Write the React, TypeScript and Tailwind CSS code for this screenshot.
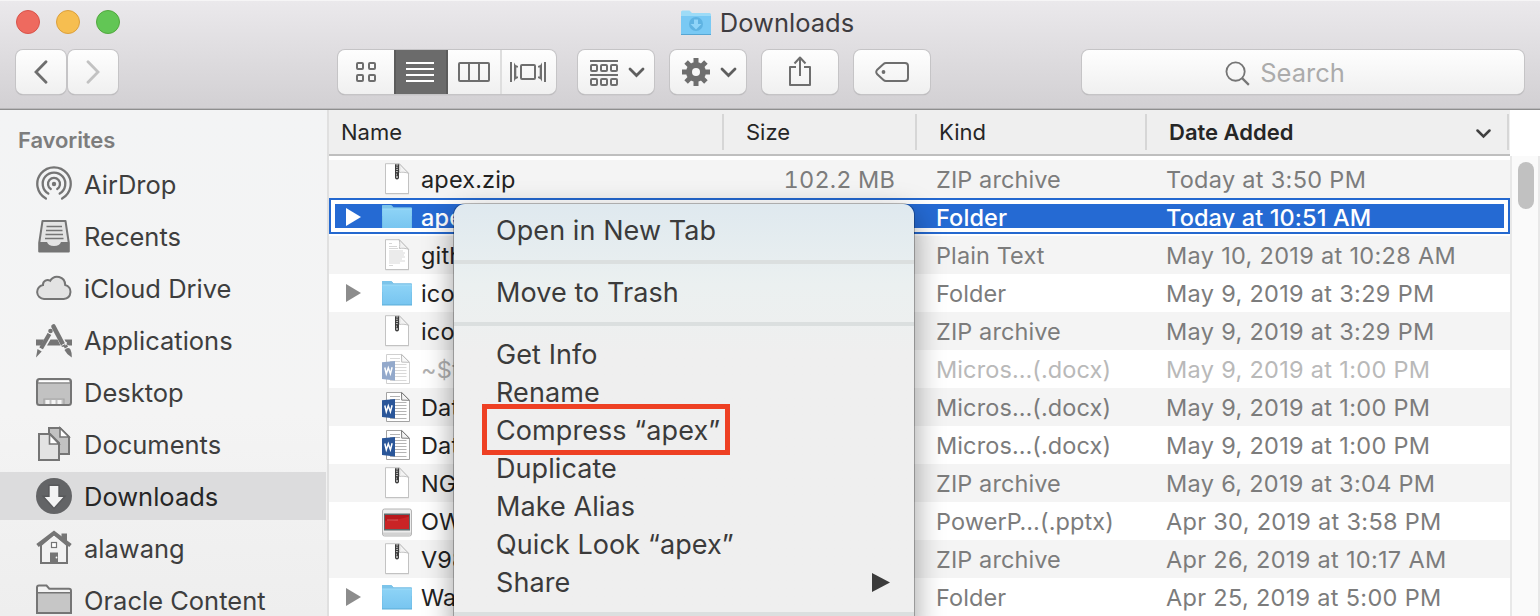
import type { ReactNode } from "react";

const FONT = "font-['Inter','Liberation_Sans',sans-serif]";

/* ---------- file icons ---------- */

function PageShape() {
  return (
    <>
      <path d="M4.500 1h13.800L28 10.800v20.400H4.500z" fill="#000" opacity=".18" />
      <path d="M4.500.7h13.700l9.300 9.600v20.200h-23z" fill="#fff" stroke="#bdbdbd" strokeWidth=".9" />
      <path d="M18.200.7c.8 3.400.7 6.300.1 8.800 3-.5 6.200-.3 9.200.8z" fill="#f3f3f3" stroke="#b5b5b5" strokeWidth=".8" />
    </>
  );
}

function ZipIcon() {
  return (
    <svg className="size-8 shrink-0" viewBox="0 0 32 32">
      <PageShape />
      <path d="M14 1.200h4v13.300a1.800 1.800 0 0 1-4 0z" fill="#3c3c3c" />
      <path d="M15.200 2h1.800M15 4.200h1.800M15.200 6.400h1.800M15 8.600h1.800" stroke="#ddd" strokeWidth=".9" />
      <circle cx="16" cy="14" r=".9" fill="#ddd" />
      <path d="M15.500 10.500v2" stroke="#bbb" strokeWidth=".8" />
    </svg>
  );
}

function TextIcon() {
  return (
    <svg className="size-8 shrink-0" viewBox="0 0 32 32">
      <PageShape />
      <path
        d="M8 4.500h3M8 7.500h8M8 9.500h9M8 12h14M8 14h16M8 16h15M8 18h16M8 20h13M8 22h16M8 24h11M8 26.500h4"
        stroke="#d3d3d3"
        strokeWidth=".9"
      />
    </svg>
  );
}

function FolderIcon() {
  return (
    <svg className="size-8 shrink-0" viewBox="0 0 32 32">
      <defs>
        <linearGradient id="folder" x1="0" y1="0" x2="0" y2="1">
          <stop offset="0" stopColor="#8dd3f6" />
          <stop offset="1" stopColor="#78c5f0" />
        </linearGradient>
      </defs>
      <path d="M1 5q0-1 1-1h7.500q.8 0 1.500.8L12.500 6.500H30q1 0 1 1V28.500H1z" fill="#5fb0da" />
      <path d="M1 5q0-1 1-1h7.500q.8 0 1.500.8L12.500 6.500H30q1 0 1 1V15H1z" fill="#7cc4ea" />
      <path d="M1.300 8h29.400v19.400H1.300z" fill="url(#folder)" />
      <path d="M1.300 8h29.400" stroke="#a5def9" strokeWidth=".8" />
    </svg>
  );
}

function WordIcon() {
  return (
    <svg className="size-8 shrink-0" viewBox="0 0 32 32">
      <path d="M5.500 1.500h15.300l7.700 7.700v21.300h-23z" fill="#fff" stroke="#a3a3a3" strokeWidth="1" />
      <path d="M20.500 1.500l.2 7.600 7.700.2z" fill="#f4f4f4" stroke="#7d7d7d" strokeWidth="1" />
      <path
        d="M9 5.500h10M9 8.500h10M14 11.500h11.500M14 14.500h11.500M14 17.500h11.500M14 20.500h11.500M14 23.500h11.500M9 27.500h16.500"
        stroke="#b4b4b4"
        strokeWidth="1"
      />
      <path d="M1 9.300 14 8v19.500L1 26z" fill="#2a5699" />
      <path d="M3.800 14.500l1.500 6.300 2-6 2.100 6 1.700-6.500" fill="none" stroke="#fff" strokeWidth="1.500" />
    </svg>
  );
}

function SlidesIcon() {
  return (
    <svg className="size-8 shrink-0" viewBox="0 0 32 32">
      <rect x="1.500" y="4" width="29" height="27" rx="2" fill="#ececec" stroke="#b4b4b4" strokeWidth="1" />
      <path d="M2 27.500h28v2.500H2z" fill="#d2d2d2" />
      <rect x="3" y="8.500" width="26" height="17" fill="#5e6a6c" />
      <rect x="4" y="10" width="24" height="14" fill="#b8181c" />
      <path d="M4 15.500c8 1 16-2 24-4V24H4z" fill="#d22a2b" opacity=".7" />
      <path d="M6 15h11" stroke="#e58a86" strokeWidth=".6" />
    </svg>
  );
}

/* ---------- file list ---------- */

type Kind = "zip" | "text" | "folder" | "word" | "slides";

interface FileRow {
  name: string;
  icon: Kind;
  size?: string;
  kind: string;
  date: string;
  expandable?: boolean;
  selected?: boolean;
  dim?: boolean;
}

const files: FileRow[] = [
  { name: "apex.zip", icon: "zip", size: "102.2 MB", kind: "ZIP archive", date: "Today at 3:50 PM" },
  { name: "apex", icon: "folder", kind: "Folder", date: "Today at 10:51 AM", expandable: true, selected: true },
  { name: "github", icon: "text", kind: "Plain Text", date: "May 10, 2019 at 10:28 AM" },
  { name: "icons", icon: "folder", kind: "Folder", date: "May 9, 2019 at 3:29 PM", expandable: true },
  { name: "icons.zip", icon: "zip", kind: "ZIP archive", date: "May 9, 2019 at 3:29 PM" },
  { name: "~$ta", icon: "word", kind: "Micros…(.docx)", date: "May 9, 2019 at 1:00 PM", dim: true },
  { name: "Data", icon: "word", kind: "Micros…(.docx)", date: "May 9, 2019 at 1:00 PM" },
  { name: "Data", icon: "word", kind: "Micros…(.docx)", date: "May 9, 2019 at 1:00 PM" },
  { name: "NG", icon: "zip", kind: "ZIP archive", date: "May 6, 2019 at 3:04 PM" },
  { name: "OW", icon: "slides", kind: "PowerP…(.pptx)", date: "Apr 30, 2019 at 3:58 PM" },
  { name: "V98", icon: "zip", kind: "ZIP archive", date: "Apr 26, 2019 at 10:17 AM" },
  { name: "Wa", icon: "folder", kind: "Folder", date: "Apr 25, 2019 at 5:00 PM", expandable: true },
];

function FileIcon({ kind }: { kind: Kind }) {
  if (kind === "zip") return <ZipIcon />;
  if (kind === "text") return <TextIcon />;
  if (kind === "folder") return <FolderIcon />;
  if (kind === "word") return <WordIcon />;
  return <SlidesIcon />;
}

function RowCells({ file }: { file: FileRow }) {
  const meta = file.selected ? "font-medium text-white" : file.dim ? "text-[#b9b9b9]" : "text-[#7c7c7c]";
  const name = file.selected ? "font-medium text-white" : file.dim ? "text-[#b0b0b0]" : "text-[#222222]";
  return (
    <div className="grid h-[38px] w-[1181px] shrink-0 grid-cols-[393px_173px_41px_230px_1fr] items-center text-[23.500px] leading-[36px] whitespace-nowrap">
      <div className="flex items-center overflow-hidden pl-[17px]">
        <div className="w-[15px] shrink-0">
          {file.expandable && (
            <svg className="h-[18px] w-[15px]" viewBox="0 0 15 18">
              <path d="M0 0v18l15-9z" fill={file.selected ? "#fff" : "#8c8c8c"} />
            </svg>
          )}
        </div>
        <div className={`ml-5 flex ${file.dim ? "opacity-50" : ""}`}>
          <FileIcon kind={file.icon} />
        </div>
        <span className={`ml-2 pt-0.5 tracking-[0.150px] ${name}`}>{file.name}</span>
      </div>
      <span className={`pt-0.5 text-right tracking-[0.150px] tabular-nums ${meta}`}>{file.size}</span>
      <span />
      <span className={`pt-0.5 tracking-[0.100px] ${meta}`}>{file.kind}</span>
      <span className={`pt-0.5 ${file.selected ? "tracking-[0.120px]" : "tracking-[0.310px]"} ${meta}`}>{file.date}</span>
    </div>
  );
}

function FileLine({ file }: { file: FileRow }) {
  if (file.selected) {
    return (
      <div className="h-[38px] bg-white pb-0.5">
        <div className="h-9 border-2 border-[#2468cf] p-1">
          <div className="flex h-6 items-start overflow-hidden bg-[#256ad3]">
            <div className="-mt-1.5 -ml-1.5">
              <RowCells file={file} />
            </div>
          </div>
        </div>
      </div>
    );
  }
  return (
    <div className="odd:bg-[#f4f4f4]">
      <RowCells file={file} />
    </div>
  );
}

/* ---------- sidebar ---------- */

const G = "#757575";

const sidebarIcons: Record<string, ReactNode> = {
  AirDrop: (
    <g fill="none" stroke={G} strokeWidth="2.300" strokeLinecap="round">
      <circle cx="18" cy="18" r="2.200" fill={G} stroke="none" />
      <path d="M14.800 23a6 6 0 1 1 6.400 0" />
      <path d="M12.300 27.600a11.300 11.300 0 1 1 11.400 0" />
      <path d="M9.900 32.600a16.700 16.700 0 1 1 16.200 0" />
    </g>
  ),
  Recents: (
    <>
      <path d="M6.500 3h23l3.300 22v8.500H3.200V25z" fill="#e3e3e3" stroke={G} strokeWidth="2" strokeLinejoin="round" />
      <path d="M10.500 8.500h15.500M10 12.500h16.500M9.500 16.500h17.500M9 20.500h18.500" stroke={G} strokeWidth="1.500" />
      <path d="M3 24h8c1 2.500 3 4 7 4s6-1.500 7-4h8v8.500q0 1-1 1H4q-1 0-1-1z" fill={G} />
    </>
  ),
  "iCloud Drive": (
    <path
      d="M8 30a7 7 0 0 1-1-13.900c-.3-4.300 4.200-6.400 7.200-4.300 4-6.800 14.800-4.800 15 4.200 7.600 1.800 6.800 13.400-1.500 14z"
      fill="#e3e3e3"
      stroke={G}
      strokeWidth="2"
      transform="translate(0 -1)"
    />
  ),
  Applications: (
    <>
      <path d="M0 17.500h8L5 23.500H0zM14.500 17.500h7l3 6H11zM28.500 17.500H36v6h-4.300z" fill={G} />
      <path d="M17.500 4.500 27 22.500" stroke={G} strokeWidth="4.600" strokeLinecap="round" />
      <path d="M13.700 11.500 5 26.500" stroke={G} strokeWidth="4.200" />
      <circle cx="14.500" cy="9" r="2.300" fill={G} />
      <path d="M1.500 27 5.700 29.500 0 35.500z" fill={G} />
      <path d="M28.500 28q3.500-3.500 6-.5 1.500 3 1.300 8-4.800-2.500-7.300-7.500z" fill={G} />
      <path d="m25.500 23.500 5.500-3M27 26.500l5.500-3" stroke="#f4f4f4" strokeWidth="1" />
      <path d="m28.200 25.400 3.200-1.800" stroke={G} strokeWidth="2.500" />
      <path d="m11 10 6 3.500M2.500 25.500l5 3" stroke="#f4f4f4" strokeWidth="1" />
    </>
  ),
  Desktop: (
    <>
      <rect x="1" y="5" width="34" height="26" rx="2.500" fill="#c2c2c2" stroke={G} strokeWidth="2" />
      <path d="M3 6.300h30v2H3z" fill="#fff" />
      <path d="M1 9h34" stroke={G} strokeWidth="1.200" />
      <path d="M8 30v-5h20v5" fill="none" stroke="#a5a5a5" strokeWidth="1.200" />
      <path d="M9.500 26h4v4h-4zM15.500 26h4v4h-4zM21.500 26h4v4h-4z" fill="#f5f5f5" />
    </>
  ),
  Documents: (
    <>
      <path d="M13 2h11l9 9v17H13z" fill="#c2c2c2" stroke={G} strokeWidth="2" />
      <path d="M24 2v9h9z" fill="#fff" stroke={G} strokeWidth="1.600" />
      <path d="M3 8h11l9 9v17H3z" fill="#e3e3e3" stroke={G} strokeWidth="2" />
      <path d="M13.500 8v10H23z" fill="#fff" stroke={G} strokeWidth="1.600" />
    </>
  ),
  Downloads: (
    <>
      <circle cx="18" cy="18" r="18" fill="#636466" />
      <path d="M13 7.300h10v11h6L18 30.500 7 18.300h6z" fill="#f3f3f3" stroke="#58595b" strokeWidth="1.400" />
    </>
  ),
  alawang: (
    <>
      <path d="M25.500 3.500H31v9l-5.500-5z" fill={G} />
      <path d="M5 15 18 4l13 11v18H5z" fill="#f2f2f2" stroke={G} strokeWidth="2" />
      <path d="M1.500 15.500 18 3l16.500 12.500" fill="none" stroke={G} strokeWidth="4" />
      <path d="M14 22.500h8V33h-8z" fill={G} />
      <circle cx="20.500" cy="27.500" r=".9" fill="#fff" />
      <rect x="15.500" y="12.500" width="5" height="5" fill="#fff" stroke={G} strokeWidth="1.200" />
    </>
  ),
  "Oracle Content": (
    <>
      <path d="M1 31V5.500Q1 3.500 3 3.500h7.500l2.800 3.200H33q2 0 2 2V31z" fill="#f3f3f3" stroke={G} strokeWidth="2" />
      <path d="M1.500 11h33v19.500h-33z" fill="#c6c6c6" />
      <path d="M1 10.700h34" stroke={G} strokeWidth="1.600" />
      <path d="M1 8v23h34V9" fill="none" stroke={G} strokeWidth="2" />
    </>
  ),
};

function Sidebar() {
  return (
    <aside className="flex h-[506px] w-[327px] shrink-0 flex-col overflow-hidden bg-linear-to-b from-[#f3f4f5] via-[#f4f4f4] via-60% to-[#eeeeee] pt-[16px]">
      <h2 className="pl-[18px] text-[22px] leading-7 font-semibold tracking-[-0.100px] text-[#7d7d7d]">Favorites</h2>
      <ul className="mt-1.5 flex flex-col gap-1">
        {Object.entries(sidebarIcons).map(([label, icon]) => (
          <li
            key={label}
            className={`flex h-12 w-[326px] shrink-0 items-center pl-9 text-[25.500px] leading-[46px] whitespace-nowrap ${
              label === "Downloads" ? "bg-[#dcdcdd] text-[#262626]" : "text-[#3e3e3e]"
            }`}
          >
            <svg className="size-9 shrink-0" viewBox="0 0 36 36">
              {icon}
            </svg>
            <span className="ml-3 pt-0.5">{label}</span>
          </li>
        ))}
      </ul>
    </aside>
  );
}

/* ---------- toolbar ---------- */

const BTN =
  "flex h-[44px] items-center justify-center rounded-[7px] bg-linear-to-b from-[#fefefe] to-[#f0f0f0] shadow-[0_0_0_1px_#c5c4c6,0_1px_1px_#8f8e90]";
const T = "#6e6e6e";

function Chevron() {
  return (
    <svg className="h-[11px] w-[17px]" viewBox="0 0 17 11">
      <path d="m2 2 6.500 6.500L15 2" fill="none" stroke="#5e5e5e" strokeWidth="2.800" strokeLinecap="round" />
    </svg>
  );
}

function Toolbar() {
  return (
    <header className="h-[110px] border-b border-[#8e8e8e] bg-linear-to-b from-[#ebe9ec] to-[#d2d0d3] shadow-[inset_0_-1px_0_#b9b8ba,inset_0_1px_0_#f6f5f6]">
      <div className="grid h-[50px] grid-cols-[1fr_auto_1fr] items-start px-4">
        <div className="flex gap-4 pt-2.5">
          <span className="size-6 rounded-full border border-[#d9534a] bg-[#ee6a5f]" />
          <span className="size-6 rounded-full border border-[#dca03c] bg-[#f6be50]" />
          <span className="size-6 rounded-full border border-[#52a83f] bg-[#62c655]" />
        </div>
        <h1 className="flex items-center pt-[7px] pr-[6px] text-[25.500px] leading-8 text-[#3e3c40]">
          <svg className="mr-2 h-8 w-8" viewBox="0 0 32 32">
            <path d="M1 5q0-1.500 1.500-1.500h7L12 6h17.500Q31 6 31 7.500V28H1z" fill="#9ddbf7" />
            <path d="M1 9h30v18.500H1z" fill="#79c9f4" />
            <path d="M1 27h30v1H1z" fill="#57a6d3" />
            <circle cx="16" cy="17" r="7" fill="#5fb3e2" />
            <path d="M14 12.500h4v4.500h3.500L16 22.500 10.500 17H14z" fill="#8fd4f8" />
          </svg>
          Downloads
        </h1>
        <span />
      </div>
      <div className="flex pl-4">
        <div className="flex gap-0.5">
          <button className={`${BTN} w-[50px]`}>
            <svg className="h-6 w-4" viewBox="0 0 16 24">
              <path d="M13 1.800 3 12l10 10.200" fill="none" stroke={T} strokeWidth="2.800" strokeLinecap="round" />
            </svg>
          </button>
          <button className={`${BTN} w-[50px]`}>
            <svg className="h-6 w-4" viewBox="0 0 16 24">
              <path d="M3 1.800 13 12 3 22.200" fill="none" stroke="#c2c2c2" strokeWidth="2.800" strokeLinecap="round" />
            </svg>
          </button>
        </div>
        <div className={`${BTN} ml-[220px] w-[218px] overflow-hidden`}>
          <div className="flex w-14 justify-center">
            <svg className="h-5 w-5" viewBox="0 0 20 20">
              <g fill="none" stroke={T} strokeWidth="2">
                <rect x="1" y="1" width="6" height="6" rx="1" />
                <rect x="13" y="1" width="6" height="6" rx="1" />
                <rect x="1" y="13" width="6" height="6" rx="1" />
                <rect x="13" y="13" width="6" height="6" rx="1" />
              </g>
            </svg>
          </div>
          <div className="flex h-full w-[54px] items-center justify-center border-x-2 border-[#5c5c5c] bg-[#6b6b6b] pr-[2px]">
            <svg className="h-5 w-7" viewBox="0 0 28 20">
              <path d="M0 1h28M0 7h28M0 13h28M0 19h28" stroke="#fff" strokeWidth="2" />
            </svg>
          </div>
          <div className="flex h-full w-[54px] items-center justify-center border-r-2 border-[#dedede]">
            <svg className="h-5 w-8" viewBox="0 0 32 20">
              <rect x="1" y="1" width="30" height="18" rx="1" fill="none" stroke={T} strokeWidth="2" />
              <path d="M11 1v18M21 1v18" stroke={T} strokeWidth="2" />
            </svg>
          </div>
          <div className="flex w-[54px] justify-center pr-[2px]">
            <svg className="h-5 w-9" viewBox="0 0 36 20">
              <path d="M1 0v20M35 0v20" stroke={T} strokeWidth="2" />
              <path d="M4 .5q1 3 4 3.500V5.500H6.300v9H8V16q-3 .5-4 3.500zM32 .5q-1 3-4 3.500V5.500h1.700v9H28V16q3 .5 4 3.500z" fill={T} />
              <rect x="11" y="3" width="14" height="14" rx="1" fill="none" stroke={T} strokeWidth="2" />
            </svg>
          </div>
        </div>
        <button className={`${BTN} ml-[22px] w-[76px] gap-[10px] pl-[3px]`}>
          <svg className="mt-[2px] h-[26px] w-7" viewBox="0 0 28 26">
            <g fill="none" stroke={T} strokeWidth="2">
              <path d="M0 1h28M0 15h28" />
              <rect x="1" y="5" width="6" height="6" rx="1" />
              <rect x="11" y="5" width="6" height="6" rx="1" />
              <rect x="21" y="5" width="6" height="6" rx="1" />
              <rect x="1" y="19" width="6" height="6" rx="1" />
              <rect x="11" y="19" width="6" height="6" rx="1" />
              <rect x="21" y="19" width="6" height="6" rx="1" />
            </g>
          </svg>
          <Chevron />
        </button>
        <button className={`${BTN} ml-4 w-[76px] gap-[10px] pl-[3px]`}>
          <svg className="size-7" viewBox="0 0 28 28">
            <g stroke={T} strokeWidth="5">
              <path d="M14 0v28M0 14h28M4.100 4.100l19.800 19.800M23.900 4.100 4.100 23.900" />
            </g>
            <circle cx="14" cy="14" r="10" fill={T} />
            <circle cx="14" cy="14" r="4" fill="#f7f7f7" />
          </svg>
          <Chevron />
        </button>
        <button className={`${BTN} ml-4 w-[76px]`}>
          <svg className="-mt-[2px] h-[30px] w-[22px]" viewBox="0 0 22 30">
            <path
              d="M7 11H1v18h20V11h-6M11 20V2M5.500 7.500 11 1.500l5.500 6"
              fill="none"
              stroke={T}
              strokeWidth="2"
              strokeLinejoin="round"
            />
          </svg>
        </button>
        <button className={`${BTN} ml-4 w-[76px]`}>
          <svg className="h-5 w-[34px]" viewBox="0 0 34 20">
            <path
              d="M11 1h19q3 0 3 3v12q0 3-3 3H11q-1.500 0-2.500-1L2 12q-1.500-2 0-4l6.500-6Q9.500 1 11 1z"
              fill="none"
              stroke={T}
              strokeWidth="2"
            />
            <circle cx="8.500" cy="10" r="1.900" fill={T} />
          </svg>
        </button>
        <div className={`${BTN} ml-[152px] w-[442px] pr-9 text-[25.500px] leading-[44px] text-[#ababab]`}>
          <svg className="mt-0.5 mr-[10px] h-[25px] w-[25px]" viewBox="0 0 26 26">
            <circle cx="11" cy="11" r="9.500" fill="none" stroke="#757575" strokeWidth="1.900" />
            <path d="m17.800 17.800 7 7" stroke="#757575" strokeWidth="2.300" />
          </svg>
          <span className="pt-0.5 leading-[42px]">Search</span>
        </div>
      </div>
    </header>
  );
}

/* ---------- context menu ---------- */

const menuGroups: string[][] = [
  ["Open in New Tab"],
  ["Move to Trash"],
  ["Get Info", "Rename", "Compress “apex”", "Duplicate", "Make Alias", "Quick Look “apex”", "Share"],
];

function ContextMenu() {
  return (
    <div className="absolute top-[204px] left-[454px] h-[430px] w-[460px] rounded-t-[11px] bg-linear-to-b from-[#dfe9ef] via-[#ebf0f0] via-[80px] to-[#efefef] to-[150px] text-[27px] tracking-[0.080px] text-[#3b3b3b] shadow-[0_0_0_1px_rgba(0,0,0,0.25),0_10px_30px_rgba(0,0,0,0.4)]">
      {menuGroups.map((group, i) => (
        <div key={i}>
          <div className={i === 0 ? "pt-[8px] pb-[10px]" : "pt-[10px] pb-[10px]"}>
            {group.map((item) => (
              <div key={item} className="flex h-[38px] items-center justify-between pr-6 pl-[42px] leading-[38px] whitespace-nowrap">
                <span className="relative">
                  {item}
                  {item.startsWith("Compress") && (
                    <span className="absolute -top-[8px] -left-[14px] h-[51px] w-[248px] border-[5px] border-[#ee4023]" />
                  )}
                </span>
                {item === "Share" && (
                  <svg className="mb-0.5 h-[19px] w-[18px]" viewBox="0 0 18 19">
                    <path d="M0 0v19l18-9.500z" fill="#3b3b3b" />
                  </svg>
                )}
              </div>
            ))}
          </div>
          <div className="h-1 bg-[#dbdfdf]" />
        </div>
      ))}
    </div>
  );
}

/* ---------- window ---------- */

export default function App() {
  return (
    <div className={`relative h-[616px] w-[1540px] overflow-hidden bg-white ${FONT}`}>
      <Toolbar />
      <div className="flex h-[506px]">
        <Sidebar />
        <div className="w-0.5 shrink-0 bg-[#e0e0e0]" />
        <main className="flex w-[1181px] shrink-0 flex-col overflow-hidden">
          <div className="grid h-[46px] shrink-0 grid-cols-[395px_193px_230px_1fr] border-b-2 border-[#bfbfbf] bg-[#efefef] pt-1 text-[22px] leading-[37px] text-[#262626]">
            <span className="h-9 border-r-2 border-[#d6d6d6] pl-[12px]">Name</span>
            <span className="h-9 border-r-2 border-[#d6d6d6] pl-[22px]">Size</span>
            <span className="h-9 border-r-2 border-[#d6d6d6] pl-[22px]">Kind</span>
            <span className="mr-[1px] flex h-9 items-center justify-between border-r-2 border-[#d6d6d6] pr-4 pl-[22px] font-semibold">
              Date Added
              <svg className="mt-1 h-[10px] w-[15px]" viewBox="0 0 15 10">
                <path d="m1.500 1.500 6 6 6-6" fill="none" stroke="#404040" strokeWidth="2.500" strokeLinecap="round" />
              </svg>
            </span>
          </div>
          <div className="mt-1">
            {files.map((file, i) => (
              <FileLine key={i} file={file} />
            ))}
          </div>
        </main>
        <div className="mt-[46px] h-[460px] w-[30px] border-x-2 border-[#e8e8e8] bg-[#fafafa] pt-1.5 pl-1.5">
          <div className="h-[47px] w-4 rounded-full bg-[#c1c1c1]" />
        </div>
      </div>
      <ContextMenu />
    </div>
  );
}
